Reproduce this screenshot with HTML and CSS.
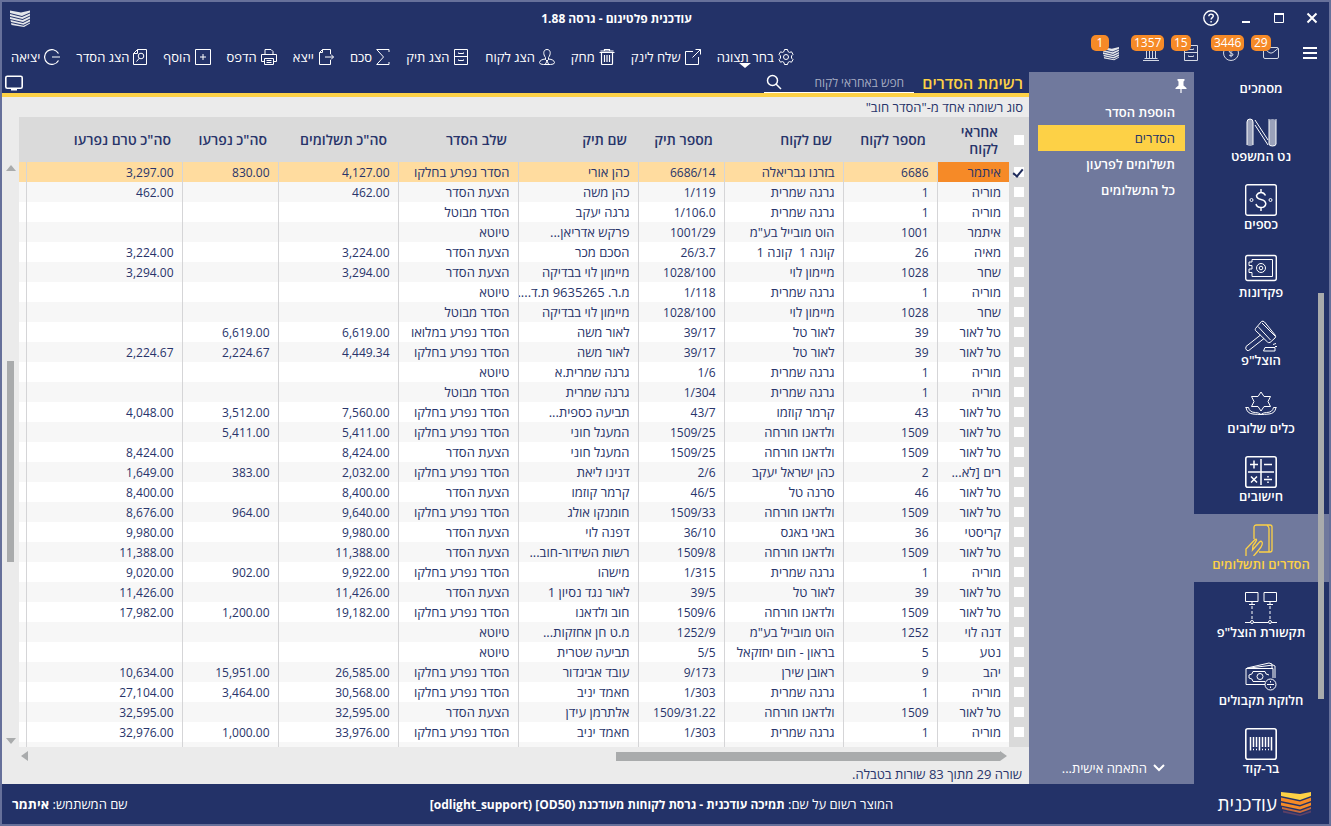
FILE: index.html
```html
<!DOCTYPE html>
<html lang="he" dir="rtl">
<head>
    <meta charset="UTF-8">
    <meta name="viewport" content="width=device-width, initial-scale=1.0">
    <title>עודכנית פלטינום - גרסה 1.88</title>
    <link rel="stylesheet" href="styles.css">
</head>
<body>
<svg class="defs" aria-hidden="true">
    <symbol id="stack" viewBox="0 0 20 17">
        <path d="M0 .5 11 2.6 20 .5V2.5L12 6 0 3zM0 4 12 7 20 3.5V5.500L12.500 9 0 6zM0 7 12.500 10 20 6.500V8.500L13 11.900 0 9zM.5 10 13 12.900 20 9.500V11.500L13.500 14.700 1 12zM1 13 13.500 15.700 20 12.500V13.600L14 17 1.500 14.900z"/>
    </symbol>
    <symbol id="cabinet" viewBox="0 0 16 16">
        <path d="M1.5.5h13v15h-13zM1.5 7.500h13M5.500 3.500v1h5v-1M5.500 10.500v1h5v-1"/>
    </symbol>
</svg>

<div class="app">
    <header class="titlebar">
        <div class="window-buttons">
            <button aria-label="סגור"><svg width="12" height="12" viewBox="0 0 12 12"><path d="M1.5 1.5l9 9M10.5 1.5l-9 9" stroke-width="2"/></svg></button>
            <button aria-label="הגדל"><svg width="12" height="12" viewBox="0 0 12 12"><path d="M1.500 2v8.500h9V2" stroke-width="1"/><path d="M1 2h10" stroke-width="2"/></svg></button>
            <button aria-label="מזער"><svg width="12" height="12" viewBox="0 0 12 12"><path d="M2 10h8" stroke-width="2"/></svg></button>
            <button aria-label="עזרה"><svg width="16" height="16" viewBox="0 0 16 16"><circle cx="8" cy="8" r="7.2" stroke-width="1.4"/><path d="M5.8 6.3c0-3 4.5-2.8 4.5-.3 0 1.6-2.2 1.6-2.2 3.4M8.1 10.9v1.5" stroke-width="1.4"/></svg></button>
        </div>
        <h1>עודכנית פלטינום - גרסה 1.88</h1>
        <svg class="app-logo" width="20" height="17"><use href="#stack"/></svg>
    </header>

    <div class="topbar">
        <button class="hamburger" aria-label="תפריט"><svg width="14" height="14" viewBox="0 0 14 14"><path d="M0 2h14M0 7h14M0 12h14" stroke-width="2"/></svg></button>
        <div class="alerts">
            <button><svg width="16" height="16" viewBox="0 0 16 16"><rect x=".5" y="2.500" width="15" height="11" rx="1.500"/><path d="M1 3.500l5 4q2 1.300 4 0l5-4"/></svg><span class="badge">29</span></button>
            <button><svg width="16" height="16" viewBox="0 0 16 16"><circle cx="8" cy="8" r="7.5"/><path d="M10 6Q8 4.200 6.200 5.700 5.700 7.300 8 8q2.500.7 2 2.100-1.500 1.500-4 0M8 3.800v8.400"/></svg><span class="badge">3446</span></button>
            <button><svg width="16" height="16"><use href="#cabinet"/></svg><span class="badge">15</span></button>
            <button><svg width="16" height="16" viewBox="0 0 16 16"><path d="M1 4.500 8 1l7 3.500zM3.500 6v7M6.500 6v7M9.500 6v7M12.500 6v7M1.500 13.500h13M0 15.500h16"/></svg><span class="badge">1357</span></button>
            <button><svg class="solid" width="16" height="15"><use href="#stack"/></svg><span class="badge">1</span></button>
        </div>
        <nav class="toolbar">
            <button class="has-menu"><svg width="16" height="16" viewBox="0 0 16 16"><path d="M6.500.5h3l.5 2 1.500.9 2-.6 1.500 2.600-1.500 1.500v2.200L15 10.600l-1.500 2.600-2-.6-1.500.9-.5 2h-3l-.5-2-1.500-.9-2 .6L1 10.600l1.500-1.500V6.900L1 5.400l1.500-2.600 2 .6L6 2.500z"/><circle cx="8" cy="8" r="2.500"/></svg>בחר תצוגה</button>
            <button><svg width="16" height="16" viewBox="0 0 16 16"><path d="M8 2.500H.5v13h13V8M7.500 8.500l8-8M10.500.5h5v5"/></svg>שלח לינק</button>
            <button><svg width="16" height="16" viewBox="0 0 16 16"><path d="M.5 3.500h15M1.500 2h13M5.500 1.500v-1h5v1M2.500 3.500v11q0 1 1 1h9q1 0 1-1v-11M5.500 6v7M8 6v7M10.500 6v7" stroke-width="1.200"/></svg>מחק</button>
            <button><svg width="16" height="16" viewBox="0 0 16 16"><path d="M8 .5c4 0 4 5 1.500 8V10.500L8 12 6.500 10.500V8.500C4 5.500 4 .5 8 .5zM6.500 10Q1 10.500.500 13.500q0 2 4 2H11.500q4 0 4-2-.5-3-6-3.500M8 12l-1.500 3M8 12l1.500 3"/></svg>הצג לקוח</button>
            <button><svg width="16" height="16"><use href="#cabinet"/></svg>הצג תיק</button>
            <button><svg width="14" height="16" viewBox="0 0 14 16"><path d="M13 3V.5H.7L7.500 8 .7 15.500H13V13"/></svg>סכם</button>
            <button><svg width="16" height="16" viewBox="0 0 16 16"><path d="M12.500 5V.5H4.500l-3 3v12h11V11M4.500.5v3h-3M7 8h8.500M13 5.500 15.500 8 13 10.500"/></svg>ייצא</button>
            <button><svg width="16" height="16" viewBox="0 0 16 16"><path d="M4 6V.5h6l2 2V6M3.500 12.500h-3V5.500h15v7h-3M3.500 9.500h9v6h-9zM5.500 11.500h5M5.500 13.500h5"/></svg>הדפס</button>
            <button><svg width="16" height="16" viewBox="0 0 16 16"><path d="M.5.5h15v15H.5zM8 5v6M5 8h6"/></svg>הוסף</button>
            <button><svg width="14" height="16" viewBox="0 0 14 16"><path d="M4.500.5h9v15H.5v-11zM4.500.5v4h-4M6.500 9 3.500 12.500"/><circle cx="8" cy="7" r="2.800"/></svg>הצג הסדר</button>
            <button><svg width="16" height="16" viewBox="0 0 16 16"><path d="M14.500 4.500a7.400 7.400 0 1 0 0 7M8 8h8" stroke-width="1.200"/></svg>יציאה</button>
        </nav>
    </div>

    <div class="body">
        <nav class="modules">
            <a href="#" class="cut">מסמכים</a>
            <a href="#"><svg width="32" height="32" viewBox="0 0 32 32"><path class="tint" d="M2 29V6q0-3 3-3t3 3v23q-3 2-6 0zM24 28V6q0-3 3.500-3T31 6v22q0 2-3.500 2T24 28z"/><path d="M2 29V6q0-3 3-3t3 3v23M24 3v25q0 2 3.500 2T31 28V3M10 4l13 20M10 9l13 20"/></svg>נט המשפט</a>
            <a href="#"><svg width="32" height="32" viewBox="0 0 32 32"><rect x=".7" y=".7" width="30.600" height="30.600" rx="2" stroke-width="1.400"/><path d="M20.500 11.500Q19 8.500 16 8.500t-4.500 3q0 3 4.500 4t4.800 4.300q-.6 3.700-4.800 3.700t-5-3.500M16 5v3.500M16 23.500V27" stroke-width="1.500"/><circle cx="6.500" cy="16" r="1.500"/><circle cx="25.500" cy="16" r="1.500"/></svg>כספים</a>
            <a href="#"><svg width="32" height="32" viewBox="0 0 32 32"><rect x=".7" y="3.500" width="30.600" height="25" rx="2" stroke-width="1.400"/><path d="M7 7.500h20.500v17H7v-4H4v-3.500h3v-3.500H4V10h3z"/><circle cx="16" cy="16" r="4.500"/><circle cx="16" cy="16" r="1.800"/><path d="M14 19l-1 1M18 19l1 1"/></svg>פקדונות</a>
            <a href="#"><svg width="32" height="32" viewBox="0 0 32 32"><path d="M10.500 8.500 16.500 1.500Q18 .5 19.500 2L30.500 15.500Q31 17 30 18L25 22.500Q23.500 23 22.500 22L10.500 10.500Q10 9.500 10.500 8.500zM13 6.500 25.500 20M17 3l13 13M15.500 15 1 26.500q-1 2.500 1 4 2 .5 3-1L19 18.500M20 27.500h10V31H18.500zM28 24.500l3-1M30 26.500h2"/></svg>הוצל"פ</a>
            <a href="#"><svg width="32" height="32" viewBox="0 0 32 32"><path d="M16 4l3 4.500h6.500L23 13.500l2.500 5H19L16 23l-3-4.500H6.500L9 13.500 6.500 8.500H13zM.5 19.500h3q1 5 7 5 3 0 5.500 2 2.500-2 5.500-2 6 0 7-5h3M1 19.500q1 6 7 6.500 5 .5 8 .5t8-.5q6-.5 7-6.500"/></svg>כלים שלובים</a>
            <a href="#"><svg width="32" height="32" viewBox="0 0 32 32"><rect x=".8" y=".8" width="30.400" height="30.400" rx="2" stroke-width="1.600"/><path d="M3 16h26M16 3v26M9 4.500v8M5 8.500h8M19 8.500h8M6 20.500l6 6M12 20.500l-6 6M19 23.500h8M23 20v1.500M23 25.500V27" stroke-width="1.500"/></svg>חישובים</a>
            <a href="#" class="active"><svg width="32" height="32" viewBox="0 0 32 32"><path d="M9 15V3.500Q9 1 11.500 1H25q2 0 2 2v23q0 2-2 2H14M22 1.500q2 1 2 3V28M1 32V25l9-9.500q1.500-1 1.500.5-.5 2-3.500 5.500l-.5 4.500 7-8q1.500-1.500 2.500 0t-1 5Q12 28.500 8.500 32" stroke-width="1.300"/></svg>הסדרים ותשלומים</a>
            <a href="#"><svg width="32" height="32" viewBox="0 0 32 32"><path d="M.5.5h12.500v9H.5zM19 .5h12.500v9H19zM4 12.500h6M22 12.500h6M7 10v2M25 10v2M0 30.500h5M9 30.500h14M27 30.500h5"/><path d="M7 14v14M25 14v14" stroke-dasharray="3 2"/><circle cx="7" cy="30" r="1.500"/><circle cx="25" cy="30" r="1.500"/></svg>תקשורת הוצל"פ</a>
            <a href="#"><svg width="32" height="32" viewBox="0 0 32 32"><path d="M20 24.500H1V8.500h27V18M2 8 24 3l3 1v4M5 8 28 5l2 1v12M8 11.500h12q0 3 4 3.500M20 21.500H8q0-3-4-3.500v-3q4-.5 4-3.500"/><circle cx="15" cy="16.500" r="3"/><circle cx="25.500" cy="24.500" r="5.500"/><path d="M22 24.500h7M25.500 21v1.500M25.500 26.500V28"/></svg>חלוקת תקבולים</a>
            <a href="#"><svg width="32" height="32" viewBox="0 0 32 32"><rect x=".8" y=".8" width="30.400" height="30.400" rx="2" stroke-width="1.600"/><path d="M5.500 9v13.500M8.500 9v10M11.500 9v10M14.500 9v13.500M17.500 9v10M20.500 9v10M23.500 9v10M26.500 9v13.500M8 21.500h1M11 21.500h1M17 21.500h1M20 21.500h1M23 21.500h1" stroke-width="1.500"/></svg>בר-קוד</a>
            <span class="modules-scroll"></span>
        </nav>

        <aside class="submenu">
            <button class="pin" aria-label="הצמד"><svg width="12" height="14" viewBox="0 0 12 14"><path d="M2.500 0h7v1.500L8.500 2.500v4L11.500 9v1H6.600v4H5.400v-4H.5V9l3-2.500v-4l-1-1z"/></svg></button>
            <a href="#">הוספת הסדר</a>
            <a href="#" class="active">הסדרים</a>
            <a href="#">תשלומים לפרעון</a>
            <a href="#">כל התשלומים</a>
            <button class="customize"><svg width="12" height="8" viewBox="0 0 12 8"><path d="M1 1l5 5 5-5" stroke-width="2"/></svg>התאמה אישית...</button>
        </aside>

        <main class="content">
            <div class="tabbar">
                <h2>רשימת הסדרים</h2>
                <div class="search">
                    <input type="text" aria-label="חיפוש" placeholder="חפש באחראי לקוח">
                    <svg width="16" height="16" viewBox="0 0 16 16"><circle cx="6.500" cy="6.500" r="5" stroke-width="1.500"/><path d="M10 10l5 5" stroke-width="1.500"/></svg>
                </div>
                <button class="display" aria-label="תצוגה"><svg width="18" height="16" viewBox="0 0 18 16"><rect x=".8" y="1.200" width="16.400" height="12" rx="1.500" stroke-width="1.600"/><path d="M6 14.500h6" stroke-width="2"/></svg></button>
            </div>
            <p class="filter">סוג רשומה אחד מ-"הסדר חוב"</p>

            <div class="grid-area">
                <div class="grid-wrap">
                    <table>
                        <colgroup>
                            <col class="c-check"><col class="c-owner"><col class="c-client"><col class="c-name"><col class="c-case"><col class="c-title"><col class="c-stage"><col class="c-sum"><col class="c-paid"><col class="c-left"><col>
                        </colgroup>
                        <thead>
                            <tr><th><input type="checkbox" aria-label="בחר הכל"></th><th>אחראי לקוח</th><th>מספר לקוח</th><th>שם לקוח</th><th>מספר תיק</th><th>שם תיק</th><th>שלב הסדר</th><th>סה"כ תשלומים</th><th>סה"כ נפרעו</th><th>סה"כ טרם נפרעו</th><th></th></tr>
                        </thead>
                        <tbody>
                            <tr class="selected"><td><input type="checkbox" aria-label="בחר" checked></td><td>איתמר</td><td>6686</td><td>בזרנו גבריאלה</td><td>6686/14</td><td>כהן אורי</td><td>הסדר נפרע בחלקו</td><td>4,127.00</td><td>830.00</td><td>3,297.00</td><td></td></tr>
                            <tr><td><input type="checkbox" aria-label="בחר"></td><td>מוריה</td><td>1</td><td>גרגה שמרית</td><td>1/119</td><td>כהן משה</td><td>הצעת הסדר</td><td>462.00</td><td></td><td>462.00</td><td></td></tr>
                            <tr><td><input type="checkbox" aria-label="בחר"></td><td>מוריה</td><td>1</td><td>גרגה שמרית</td><td>1/106.0</td><td>גרגה יעקב</td><td>הסדר מבוטל</td><td></td><td></td><td></td><td></td></tr>
                            <tr><td><input type="checkbox" aria-label="בחר"></td><td>איתמר</td><td>1001</td><td>הוט מובייל בע"מ</td><td>1001/29</td><td>פרקש אדריאן...</td><td>טיוטא</td><td></td><td></td><td></td><td></td></tr>
                            <tr><td><input type="checkbox" aria-label="בחר"></td><td>מאיה</td><td>26</td><td>קונה 1  קונה 1</td><td>26/3.7</td><td>הסכם מכר</td><td>הצעת הסדר</td><td>3,224.00</td><td></td><td>3,224.00</td><td></td></tr>
                            <tr><td><input type="checkbox" aria-label="בחר"></td><td>שחר</td><td>1028</td><td>מיימון לוי</td><td>1028/100</td><td>מיימון לוי בבדיקה</td><td>הצעת הסדר</td><td>3,294.00</td><td></td><td>3,294.00</td><td></td></tr>
                            <tr><td><input type="checkbox" aria-label="בחר"></td><td>מוריה</td><td>1</td><td>גרגה שמרית</td><td>1/118</td><td>מ.ר. 9635265 ת.ד....</td><td>טיוטא</td><td></td><td></td><td></td><td></td></tr>
                            <tr><td><input type="checkbox" aria-label="בחר"></td><td>שחר</td><td>1028</td><td>מיימון לוי</td><td>1028/100</td><td>מיימון לוי בבדיקה</td><td>הסדר מבוטל</td><td></td><td></td><td></td><td></td></tr>
                            <tr><td><input type="checkbox" aria-label="בחר"></td><td>טל לאור</td><td>39</td><td>לאור טל</td><td>39/17</td><td>לאור משה</td><td>הסדר נפרע במלואו</td><td>6,619.00</td><td>6,619.00</td><td></td><td></td></tr>
                            <tr><td><input type="checkbox" aria-label="בחר"></td><td>טל לאור</td><td>39</td><td>לאור טל</td><td>39/17</td><td>לאור משה</td><td>הסדר נפרע בחלקו</td><td>4,449.34</td><td>2,224.67</td><td>2,224.67</td><td></td></tr>
                            <tr><td><input type="checkbox" aria-label="בחר"></td><td>מוריה</td><td>1</td><td>גרגה שמרית</td><td>1/6</td><td>גרגה שמרית.א</td><td>טיוטא</td><td></td><td></td><td></td><td></td></tr>
                            <tr><td><input type="checkbox" aria-label="בחר"></td><td>מוריה</td><td>1</td><td>גרגה שמרית</td><td>1/304</td><td>גרגה שמרית</td><td>הסדר מבוטל</td><td></td><td></td><td></td><td></td></tr>
                            <tr><td><input type="checkbox" aria-label="בחר"></td><td>טל לאור</td><td>43</td><td>קרמר קוזמו</td><td>43/7</td><td>תביעה כספית...</td><td>הסדר נפרע בחלקו</td><td>7,560.00</td><td>3,512.00</td><td>4,048.00</td><td></td></tr>
                            <tr><td><input type="checkbox" aria-label="בחר"></td><td>טל לאור</td><td>1509</td><td>ולדאנו חורחה</td><td>1509/25</td><td>המעגל חוני</td><td>הסדר נפרע בחלקו</td><td>5,411.00</td><td>5,411.00</td><td></td><td></td></tr>
                            <tr><td><input type="checkbox" aria-label="בחר"></td><td>טל לאור</td><td>1509</td><td>ולדאנו חורחה</td><td>1509/25</td><td>המעגל חוני</td><td>הצעת הסדר</td><td>8,424.00</td><td></td><td>8,424.00</td><td></td></tr>
                            <tr><td><input type="checkbox" aria-label="בחר"></td><td>רים [לא...</td><td>2</td><td>כהן ישראל יעקב</td><td>2/6</td><td>דנינו ליאת</td><td>הסדר נפרע בחלקו</td><td>2,032.00</td><td>383.00</td><td>1,649.00</td><td></td></tr>
                            <tr><td><input type="checkbox" aria-label="בחר"></td><td>טל לאור</td><td>46</td><td>סרנה טל</td><td>46/5</td><td>קרמר קוזמו</td><td>הצעת הסדר</td><td>8,400.00</td><td></td><td>8,400.00</td><td></td></tr>
                            <tr><td><input type="checkbox" aria-label="בחר"></td><td>טל לאור</td><td>1509</td><td>ולדאנו חורחה</td><td>1509/33</td><td>חומנקו אולג</td><td>הסדר נפרע בחלקו</td><td>9,640.00</td><td>964.00</td><td>8,676.00</td><td></td></tr>
                            <tr><td><input type="checkbox" aria-label="בחר"></td><td>קריסטי</td><td>36</td><td>באני באגס</td><td>36/10</td><td>דפנה לוי</td><td>הצעת הסדר</td><td>9,980.00</td><td></td><td>9,980.00</td><td></td></tr>
                            <tr><td><input type="checkbox" aria-label="בחר"></td><td>טל לאור</td><td>1509</td><td>ולדאנו חורחה</td><td>1509/8</td><td>רשות השידור-חוב...</td><td>הצעת הסדר</td><td>11,388.00</td><td></td><td>11,388.00</td><td></td></tr>
                            <tr><td><input type="checkbox" aria-label="בחר"></td><td>מוריה</td><td>1</td><td>גרגה שמרית</td><td>1/315</td><td>מישהו</td><td>הסדר נפרע בחלקו</td><td>9,922.00</td><td>902.00</td><td>9,020.00</td><td></td></tr>
                            <tr><td><input type="checkbox" aria-label="בחר"></td><td>טל לאור</td><td>39</td><td>לאור טל</td><td>39/5</td><td>לאור נגד נסיון 1</td><td>הצעת הסדר</td><td>11,426.00</td><td></td><td>11,426.00</td><td></td></tr>
                            <tr><td><input type="checkbox" aria-label="בחר"></td><td>טל לאור</td><td>1509</td><td>ולדאנו חורחה</td><td>1509/6</td><td>חוב ולדאנו</td><td>הסדר נפרע בחלקו</td><td>19,182.00</td><td>1,200.00</td><td>17,982.00</td><td></td></tr>
                            <tr><td><input type="checkbox" aria-label="בחר"></td><td>דנה לוי</td><td>1252</td><td>הוט מובייל בע"מ</td><td>1252/9</td><td>מ.ט חן אחזקות...</td><td>טיוטא</td><td></td><td></td><td></td><td></td></tr>
                            <tr><td><input type="checkbox" aria-label="בחר"></td><td>נטע</td><td>5</td><td>בראון - חום יחזקאל</td><td>5/5</td><td>תביעה שטרית</td><td>טיוטא</td><td></td><td></td><td></td><td></td></tr>
                            <tr><td><input type="checkbox" aria-label="בחר"></td><td>יהב</td><td>9</td><td>ראובן שירן</td><td>9/173</td><td>עובד אביגדור</td><td>הסדר נפרע בחלקו</td><td>26,585.00</td><td>15,951.00</td><td>10,634.00</td><td></td></tr>
                            <tr><td><input type="checkbox" aria-label="בחר"></td><td>מוריה</td><td>1</td><td>גרגה שמרית</td><td>1/303</td><td>חאמד יניב</td><td>הסדר נפרע בחלקו</td><td>30,568.00</td><td>3,464.00</td><td>27,104.00</td><td></td></tr>
                            <tr><td><input type="checkbox" aria-label="בחר"></td><td>טל לאור</td><td>1509</td><td>ולדאנו חורחה</td><td>1509/31.22</td><td>אלתרמן עידן</td><td>הצעת הסדר</td><td>32,595.00</td><td></td><td>32,595.00</td><td></td></tr>
                            <tr><td><input type="checkbox" aria-label="בחר"></td><td>מוריה</td><td>1</td><td>גרגה שמרית</td><td>1/303</td><td>חאמד יניב</td><td>הסדר נפרע בחלקו</td><td>33,976.00</td><td>1,000.00</td><td>32,976.00</td><td></td></tr>
                            <tr><td></td><td></td><td></td><td></td><td></td><td></td><td></td><td></td><td></td><td></td><td></td></tr>
                        </tbody>
                    </table>
                </div>
                <div class="vscroll">
                    <span class="arrow up"></span>
                    <div class="track"><span class="thumb"></span></div>
                    <span class="arrow down"></span>
                </div>
            </div>
            <div class="hscroll">
                <span class="arrow right"></span>
                <div class="track"><span class="thumb"></span></div>
                <span class="arrow left"></span>
            </div>
            <p class="status">שורה 29 מתוך 83 שורות בטבלה.</p>
        </main>
    </div>

    <footer class="footer">
        <div class="brand">
            <svg width="30" height="24" viewBox="0 0 30 24">
                <path fill="#fdd146" d="M0 0 19 2 30 0V4L19 8 0 4z"/>
                <path fill="#f68a27" d="M0 5.500 19 9.500 30 5.500V9L19 13 0 9zM0 10.500 19 14.500 30 10.500V13.500L19 17.500 0 13.500z"/>
                <path fill="#c86a3c" d="M1 15 19 19 30 15V17L19 21 1 17z"/>
                <path fill="#5d4066" d="M2 18.500 19 22.500 30 18.500V20.500L19 24 2 20.500z"/>
            </svg>
            <span>עודכנית</span>
        </div>
        <p class="licence">המוצר רשום על שם: <b>תמיכה עודכנית - גרסת לקוחות מעודכנת (<bdi>OD50</bdi>] (<bdi>odlight_support</bdi>]</b></p>
        <p class="user">שם המשתמש: <b>איתמר</b></p>
    </footer>
</div>
</body>
</html>
```
FILE: styles.css
```css
* { box-sizing: border-box; }
body {
    margin: 0;
    font-family: "Open Sans", "Noto Sans", sans-serif;
    font-size: 13px;
    color: #28346a;
}
h1, h2, p { margin: 0; }
a { color: inherit; text-decoration: none; }
button {
    background: none;
    border: none;
    padding: 0;
    color: inherit;
    font: inherit;
    cursor: pointer;
}
svg { display: block; flex: none; fill: none; stroke: currentColor; }
.defs { position: absolute; width: 0; height: 0; }

.app {
    display: flex;
    flex-direction: column;
    height: 100vh;
    border: 2px solid #66709a;
    background-color: #233268;
    color: #fff;
}

/* title bar */
.titlebar {
    display: flex;
    align-items: center;
    height: 34px;
    padding: 0 11px 2px 8px;
}
.titlebar h1 { flex: 1; font-size: 12px; font-weight: 700; text-align: center; }
.window-buttons { display: flex; align-items: center; gap: 21px; }
.app-logo, .solid { fill: #e4e6ea; stroke: none; }

/* toolbar and alerts */
.topbar {
    display: flex;
    align-items: center;
    height: 36px;
    padding: 0 12px 2px 9px;
}
.hamburger { margin-left: 12px; }
.alerts { display: flex; }
.alerts button { position: relative; width: 40px; height: 32px; color: #d5d9e4; }
.alerts svg { margin: 0 12px 0 auto; }
.badge {
    position: absolute;
    top: -2px;
    left: 0;
    min-width: 18px;
    padding: 0 3px;
    border-radius: 5px;
    background-color: #f68a27;
    color: #fff;
    font-size: 12px;
    line-height: 16px;
}
.toolbar { display: flex; gap: 16px; margin-right: auto; padding-top: 8px; }
.toolbar button { position: relative; display: flex; align-items: center; gap: 4px; height: 24px; white-space: nowrap; }
.has-menu::after {
    content: "";
    position: absolute;
    top: 18px;
    left: 22px;
    border: 6px solid transparent;
    border-top: 5px solid #fff;
    border-bottom: none;
}

.body { display: flex; flex: 1; min-height: 0; }

/* modules */
.modules { position: relative; width: 135px; overflow: hidden; }
.modules a {
    display: flex;
    flex-direction: column;
    align-items: center;
    height: 68px;
    padding: 10px 1px 0 0;
    font-weight: 600;
    line-height: 16px;
}
.modules .cut { height: 34px; padding-top: 8px; }
.modules .active { background-color: #70799d; color: #fdd146; }
.modules .tint { fill: #9aa1ba; stroke: none; }
.modules-scroll {
    position: absolute;
    top: 31%;
    right: 5px;
    width: 6px;
    height: 57%;
    background-color: #a9abac;
}

/* sub menu */
.submenu { display: flex; flex-direction: column; width: 165px; padding: 0 9px 6px; background-color: #70799d; }
.submenu a { padding: 0 10px; font-weight: 600; line-height: 26px; }
.submenu .active { background-color: #fdd146; color: #233268; font-weight: 400; }
.pin { align-self: flex-start; height: 27px; margin-right: -2px; }
.pin svg { fill: #fff; stroke: none; }
.customize { display: flex; align-items: center; gap: 6px; margin: auto 20px 0 0; line-height: 20px; }

/* content */
.content { display: flex; flex-direction: column; flex: 1; min-width: 0; background-color: #ebebeb; color: #28346a; }
.tabbar {
    display: flex;
    align-items: center;
    height: 25px;
    padding: 0 6px 0 3px;
    border-bottom: 4px solid #fdd146;
    background-color: #233268;
    color: #fff;
}
.tabbar h2 { color: #fdd146; font-size: 16px; font-weight: 600; line-height: 20px; }
.search { display: flex; align-items: center; width: 150px; height: 21px; margin-right: 8px; border-bottom: 1px solid #fff; }
.search input {
    flex: 1;
    min-width: 0;
    padding: 0 10px 0 0;
    border: none;
    outline: none;
    background: none;
    color: #fff;
    font: inherit;
    font-size: 12px;
}
.search input::placeholder { color: #a7adc3; opacity: 1; }
.search svg { margin-left: 2px; }
.display { margin-right: auto; }
.filter { padding: 0 6px; line-height: 20px; }

/* grid */
.grid-area { display: flex; flex: 1; min-height: 0; }
.grid-wrap { flex: 1; min-width: 0; overflow: hidden; }
table { width: 100%; table-layout: fixed; border-collapse: collapse; }
.c-check { width: 20px; }
.c-owner { width: 72px; }
.c-client { width: 94px; }
.c-name { width: 119px; }
.c-case { width: 86px; }
.c-title, .c-stage, .c-sum { width: 120px; }
.c-paid { width: 96px; }
.c-left { width: 156px; }
th {
    height: 45px;
    padding: 0 11px 0 0;
    background-color: #dadada;
    font-size: 14px;
    font-weight: 600;
    line-height: 17px;
    text-align: right;
}
td {
    height: 20px;
    padding: 0 8px 0 0;
    border-left: 1px solid #d5d5d7;
    background-color: #fff;
    line-height: 19px;
    white-space: pre;
    overflow: hidden;
}
/* number columns */
td:nth-child(3), td:nth-child(5), td:nth-child(n+8) { font-size: 12px; }
tr:nth-child(even) td { background-color: #f7f7f7; }
.selected td { background-color: #ffdc9f; }
.selected td:nth-child(2) { background-color: #f68a27; }
td:last-child { border-left: none; }
th:first-child { padding: 0 5px 0 0; }
tbody td:first-child { padding: 0 5px 0 0; border-left: none; background-color: #dadada !important; }
table input {
    appearance: none;
    display: block;
    width: 10px;
    height: 10px;
    margin: 0;
    background-color: #fff;
}
table input:checked::after {
    content: "";
    display: block;
    width: 4px;
    height: 8px;
    margin: 0 3px 0 0;
    border: solid #1f2c5c;
    border-width: 0 2px 2px 0;
    transform: rotate(40deg);
}

/* scroll bars */
.vscroll { display: flex; flex-direction: column; align-items: center; width: 17px; padding: 48px 0 3px; }
.vscroll .track { display: grid; grid-template-rows: 190fr 200fr 176fr; flex: 1; width: 7px; }
.vscroll .thumb { grid-row: 2; }
.hscroll { display: flex; align-items: center; height: 18px; padding: 0 22px 0 19px; }
.hscroll .track { flex: 1; height: 9px; }
.hscroll .thumb { display: block; width: 39.5%; height: 9px; }
.thumb { background-color: #a9abac; }
.arrow { border: 5px solid transparent; }
.up { border-top: none; border-bottom: 6px solid #a9abac; }
.down { border-bottom: none; border-top: 6px solid #a9abac; }
.left { border-left: none; border-right: 7px solid #a9abac; }
.right { border-right: none; border-left: 7px solid #a9abac; }
.status { padding: 0 7px; line-height: 19px; }

/* footer */
.footer { display: flex; align-items: center; height: 40px; padding: 0 18px 0 10px; }
.brand { display: flex; align-items: center; gap: 4px; font-size: 19px; line-height: 24px; }
.brand svg { stroke: none; }
.brand, .user { flex: 1; }
.user { text-align: left; }
.licence b { font-size: 12px; }
```
